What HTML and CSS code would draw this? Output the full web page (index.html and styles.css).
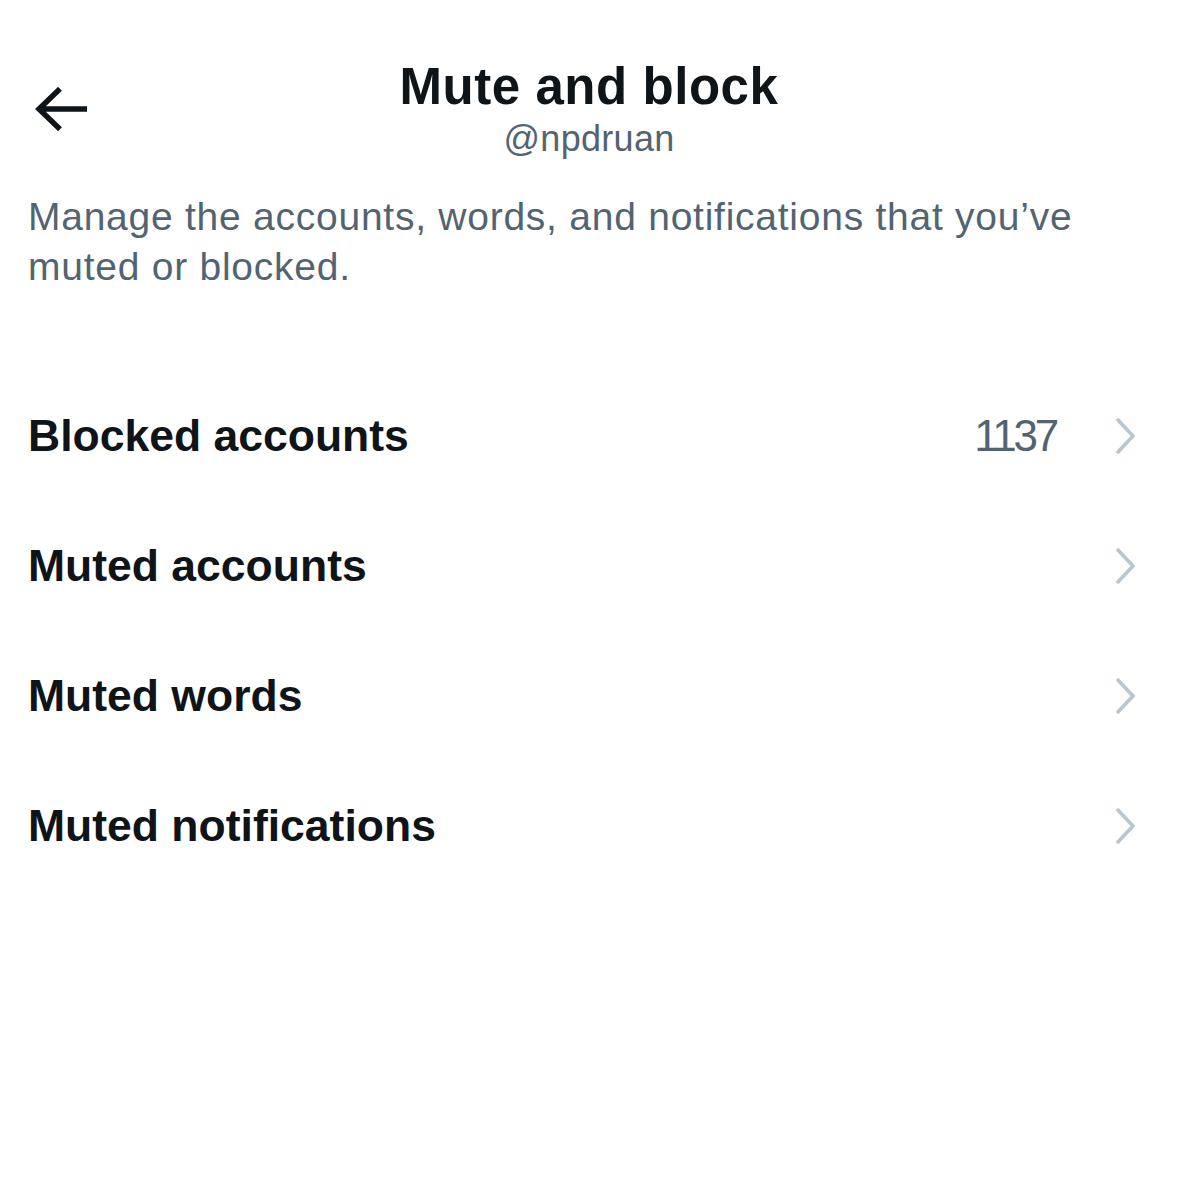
FILE: index.html
```html
<!DOCTYPE html>
<html lang="en">
<head>
<meta charset="utf-8">
<title>Mute and block</title>
<link rel="stylesheet" href="styles.css">
</head>
<body>
<div class="page">
  <header class="header">
    <div class="back">
      <svg class="back-icon" width="52" height="44" viewBox="0 0 52 44" aria-hidden="true">
        <path d="M52 22 H4 M25 1.8 L4 22 L25 42.2" fill="none" stroke="#0f1419" stroke-width="5.5"/>
      </svg>
    </div>
    <div class="titles">
      <h1 class="title">Mute and block</h1>
      <div class="handle">@npdruan</div>
    </div>
    <div class="spacer"></div>
  </header>

  <p class="desc">Manage the accounts, words, and notifications that you’ve muted or blocked.</p>

  <ul class="list">
    <li class="row">
      <span class="label">Blocked accounts</span>
      <span class="count">1137</span>
      <svg class="chev" width="22" height="38" viewBox="0 0 22 38" aria-hidden="true"><path d="M3 2 L19 19 L3 36" fill="none" stroke="#b9c6ce" stroke-width="3.6"/></svg>
    </li>
    <li class="row">
      <span class="label">Muted accounts</span>
      <svg class="chev" width="22" height="38" viewBox="0 0 22 38" aria-hidden="true"><path d="M3 2 L19 19 L3 36" fill="none" stroke="#b9c6ce" stroke-width="3.6"/></svg>
    </li>
    <li class="row">
      <span class="label">Muted words</span>
      <svg class="chev" width="22" height="38" viewBox="0 0 22 38" aria-hidden="true"><path d="M3 2 L19 19 L3 36" fill="none" stroke="#b9c6ce" stroke-width="3.6"/></svg>
    </li>
    <li class="row">
      <span class="label">Muted notifications</span>
      <svg class="chev" width="22" height="38" viewBox="0 0 22 38" aria-hidden="true"><path d="M3 2 L19 19 L3 36" fill="none" stroke="#b9c6ce" stroke-width="3.6"/></svg>
    </li>
  </ul>
</div>
</body>
</html>
```
FILE: styles.css
```css
html, body {
  margin: 0;
  padding: 0;
  background: #ffffff;
}
body {
  font-family: "Liberation Sans", Arial, sans-serif;
  color: #0f1419;
}
.page {
  padding: 57px 28px 0 28px;
}
.header {
  display: grid;
  grid-template-columns: 1fr auto 1fr;
  align-items: center;
}
.back {
  display: flex;
  align-items: center;
  padding-left: 7px;
}
.back-icon {
  display: block;
}
.titles {
  display: flex;
  flex-direction: column;
  align-items: center;
}
.title {
  margin: 0;
  font-size: 51px;
  line-height: 60px;
  font-weight: 700;
  letter-spacing: 0.55px;
}
.handle {
  font-size: 36px;
  line-height: 44px;
  color: #536471;
  letter-spacing: 0.3px;
}
.desc {
  margin: 31px 0 0;
  font-size: 39px;
  line-height: 50px;
  letter-spacing: 0.75px;
  color: #536471;
  max-width: 1100px;
}
.list {
  list-style: none;
  margin: 79px 0 0;
  padding: 0 14px 0 0;
}
.row {
  display: flex;
  align-items: center;
  height: 130px;
}
.label {
  flex: 1;
  font-size: 44.5px;
  line-height: 52px;
  font-weight: 700;
  letter-spacing: 0;
}
.count {
  font-size: 44px;
  line-height: 52px;
  letter-spacing: -3.2px;
  color: #536471;
  margin-right: 58px;
}
.chev {
  display: block;
  flex: none;
}
```
